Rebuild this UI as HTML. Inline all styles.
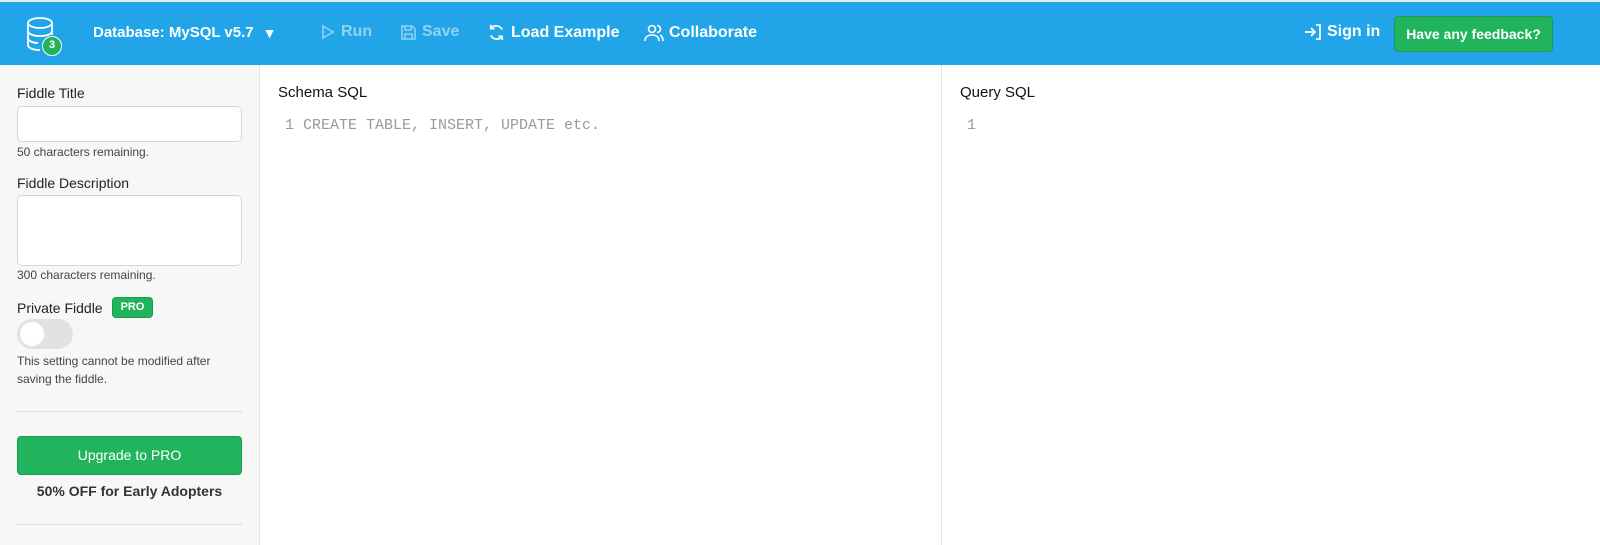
<!DOCTYPE html>
<html><head><meta charset="utf-8"><style>
*{box-sizing:border-box;margin:0;padding:0}
body{width:1600px;height:545px;overflow:hidden;font-family:"Liberation Sans",sans-serif;background:#fff;position:relative}
.hdr{position:absolute;left:0;top:0;width:1600px;height:65px;background:#22a5e8;color:#fff;border-top:2px solid #e8e8e8}
.hdr .it{position:absolute;top:21px;font-size:16px;display:flex;align-items:center;gap:5px;font-weight:bold}
.dim{opacity:.5}
.side{position:absolute;left:0;top:65px;width:260px;height:480px;background:#f7f7f7;border-right:1px solid #e3e3e3}
.lbl{position:absolute;left:17px;font-size:14px;color:#222}
.inp{position:absolute;left:17px;width:225px;background:#fff;border:1px solid #d6d6d6;border-radius:5px}
.sm{position:absolute;left:17px;font-size:12px;color:#444;line-height:22px}
.hr{position:absolute;left:17px;width:225px;border-top:1px solid #ddd}
.pane{position:absolute;top:65px;height:480px}
.ttl{position:absolute;top:19px;font-size:15px;color:#111}
.code{position:absolute;top:52px;font-family:"Liberation Mono",monospace;font-size:15px;color:#999}
</style></head><body>
<div class="hdr">
 <svg style="position:absolute;left:26px;top:14px" width="36" height="40" viewBox="0 0 36 40" fill="none" stroke="#fff" stroke-width="1.8">
  <ellipse cx="14" cy="7" rx="12" ry="5"/><path d="M2 7v22c0 3 5 5 12 5M26 7v12M2 15c0 3 5 5 12 5s12-2 12-5M2 22c0 3 5 5 10 5"/>
 </svg>
 <div style="position:absolute;left:42px;top:34px;width:20px;height:20px;border-radius:50%;background:#22b35d;border:1.5px solid #fff;color:#fff;font-size:11px;font-weight:bold;text-align:center;line-height:17px">3</div>
 <div class="it" style="left:93px;font-size:15px;top:22px">Database: MySQL v5.7 <span style="font-size:14px;margin-left:4px">▼</span></div>
 <div class="it dim" style="left:320px"><svg width="16" height="16" viewBox="0 0 16 16" fill="none" stroke="#fff" stroke-width="1.6"><path d="M3 2l10 6-10 6z"/></svg>Run</div>
 <div class="it dim" style="left:400px"><svg width="17" height="17" viewBox="0 0 17 17" fill="none" stroke="#fff" stroke-width="1.6"><path d="M2 2h10l3 3v10H2z M5 2v4h6V2 M5 15v-5h7v5"/></svg>Save</div>
 <div class="it" style="left:487px"><svg width="19" height="19" viewBox="0 0 20 20" fill="none" stroke="#fff" stroke-width="1.8"><path d="M16 7a7 7 0 0 0-12-1M4 13a7 7 0 0 0 12 1M4 2v4h4M16 18v-4h-4"/></svg>Load Example</div>
 <div class="it" style="left:644px"><svg width="20" height="19" viewBox="0 0 20 19" fill="none" stroke="#fff" stroke-width="1.6"><circle cx="8" cy="6" r="3.5"/><path d="M1 18c0-4 3-6 7-6s7 2 7 6M13 2.5a3.5 3.5 0 0 1 0 7M16 12c2 1 3 3 3 6"/></svg>Collaborate</div>
 <div class="it" style="left:1304px"><svg width="18" height="18" viewBox="0 0 18 18" fill="none" stroke="#fff" stroke-width="1.7"><path d="M1 9h10M7 5l4 4-4 4M12 2h4v14h-4"/></svg>Sign in</div>
 <div style="position:absolute;left:1394px;top:14px;width:159px;height:36px;background:#22b35d;border:1px solid #1c9a4f;border-radius:4px;color:#fff;font-size:14px;font-weight:bold;text-align:center;line-height:34px">Have any feedback?</div>
</div>
<div class="side">
 <div class="lbl" style="top:20px">Fiddle Title</div>
 <div class="inp" style="top:41px;height:36px"></div>
 <div class="sm" style="top:76px">50 characters remaining.</div>
 <div class="lbl" style="top:110px">Fiddle Description</div>
 <div class="inp" style="top:130px;height:71px"></div>
 <div class="sm" style="top:199px">300 characters remaining.</div>
 <div class="lbl" style="top:235px">Private Fiddle</div>
 <div style="position:absolute;left:112px;top:232px;width:41px;height:21px;background:#22b35d;border:1px solid #1c9a4f;border-radius:4px;color:#fff;font-size:11px;font-weight:bold;text-align:center;line-height:19px">PRO</div>
 <div style="position:absolute;left:17px;top:254px;width:56px;height:30px;border-radius:15px;background:#e2e2e2"><div style="position:absolute;left:3px;top:3px;width:24px;height:24px;border-radius:50%;background:#fff"></div></div>
 <div class="sm" style="top:287px;line-height:18px">This setting cannot be modified after<br>saving the fiddle.</div>
 <div class="hr" style="top:346px"></div>
 <div style="position:absolute;left:17px;top:371px;width:225px;height:39px;background:#22b35d;border:1px solid #1c9a4f;border-radius:4px;color:#fff;font-size:14px;text-align:center;line-height:37px">Upgrade to PRO</div>
 <div style="position:absolute;left:17px;width:225px;top:418px;text-align:center;font-size:14px;font-weight:bold;color:#333">50% OFF for Early Adopters</div>
 <div class="hr" style="top:459px"></div>
</div>
<div class="pane" style="left:261px;width:681px;border-right:1px solid #e3e3e3">
 <div class="ttl" style="left:17px">Schema SQL</div>
 <div class="code" style="left:24px">1 CREATE TABLE, INSERT, UPDATE etc.</div>
</div>
<div class="pane" style="left:943px;width:657px">
 <div class="ttl" style="left:17px">Query SQL</div>
 <div class="code" style="left:24px">1</div>
</div>
</body></html>
